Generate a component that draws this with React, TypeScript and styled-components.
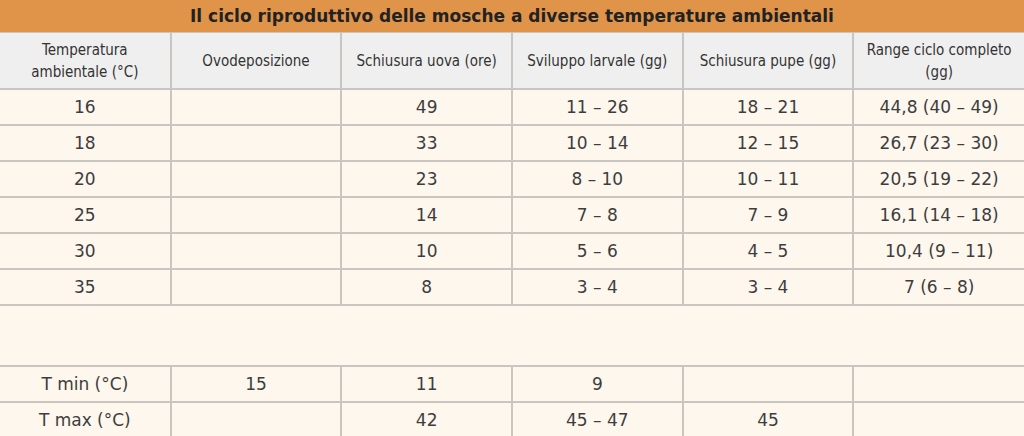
import React from 'react';
import styled, { createGlobalStyle } from 'styled-components';

const GlobalStyle = createGlobalStyle`
  html, body {
    margin: 0;
    padding: 0;
    background: #fdf7ee;
  }
  body {
    font-family: "DejaVu Sans", Verdana, sans-serif;
    color: #3d3d3d;
  }
`

type Row = [string, string, string, string, string, string]

const rows: Row[] = [
  ['16', '', '49', '11 – 26', '18 – 21', '44,8 (40 – 49)'],
  ['18', '', '33', '10 – 14', '12 – 15', '26,7 (23 – 30)'],
  ['20', '', '23', '8 – 10', '10 – 11', '20,5 (19 – 22)'],
  ['25', '', '14', '7 – 8', '7 – 9', '16,1 (14 – 18)'],
  ['30', '', '10', '5 – 6', '4 – 5', '10,4 (9 – 11)'],
  ['35', '', '8', '3 – 4', '3 – 4', '7 (6 – 8)'],
]

const limits: Row[] = [
  ['T min (°C)', '15', '11', '9', '', ''],
  ['T max (°C)', '', '42', '45 – 47', '45', ''],
]

const headers = [
  'Temperatura ambientale (°C)',
  'Ovodeposizione',
  'Schiusura uova (ore)',
  'Sviluppo larvale (gg)',
  'Schiusura pupe (gg)',
  'Range ciclo completo (gg)',
]

export default function App() {
  return (
    <>
      <GlobalStyle />
      <Table>
        <colgroup>
          {headers.map((h) => <col key={h} style={{ width: `${100 / 6}%` }} />)}
        </colgroup>
        <thead>
          <tr>
            <Title colSpan={6}>Il ciclo riproduttivo delle mosche a diverse temperature ambientali</Title>
          </tr>
          <tr>
            {headers.map((h) => <HeadCell key={h}>{h}</HeadCell>)}
          </tr>
        </thead>
        <tbody>
          {rows.map((r) => (
            <tr key={r[0]}>
              {r.map((c, i) => <Cell key={i}>{c}</Cell>)}
            </tr>
          ))}
          <tr>
            <Spacer colSpan={6} />
          </tr>
          {limits.map((r) => (
            <tr key={r[0]}>
              {r.map((c, i) => <Cell key={i}>{c}</Cell>)}
            </tr>
          ))}
        </tbody>
      </Table>
    </>
  )
}

const Table = styled.table`
  width: 1024px;
  border-collapse: collapse;
  table-layout: fixed;
  background: #fdf7ee;
`
const Title = styled.th`
  height: 32px;
  padding: 0;
  background: #e0944a;
  color: #222;
  font-size: 17px;
  font-weight: 700;
  text-align: center;
  border-bottom: 1px solid #c9c5c0;
`
const HeadCell = styled.th`
  height: 55px;
  padding: 0 8px;
  background: #efefef;
  color: #333;
  font-family: "DejaVu Sans Condensed", "DejaVu Sans", sans-serif;
  font-size: 15px;
  font-weight: 400;
  line-height: 22px;
  text-align: center;
  border: 2px solid #c9c5c0;
  border-top: none;
  &:first-child { border-left: none; }
  &:last-child { border-right: none; }
`
const Cell = styled.td`
  height: 34px;
  padding: 0;
  font-size: 17px;
  text-align: center;
  border: 2px solid #c9c5c0;
  &:first-child { border-left: none; }
  &:last-child { border-right: none; }
`
const Spacer = styled.td`
  height: 59px;
  padding: 0;
  border-top: 2px solid #c9c5c0;
  border-bottom: 2px solid #c9c5c0;
`
